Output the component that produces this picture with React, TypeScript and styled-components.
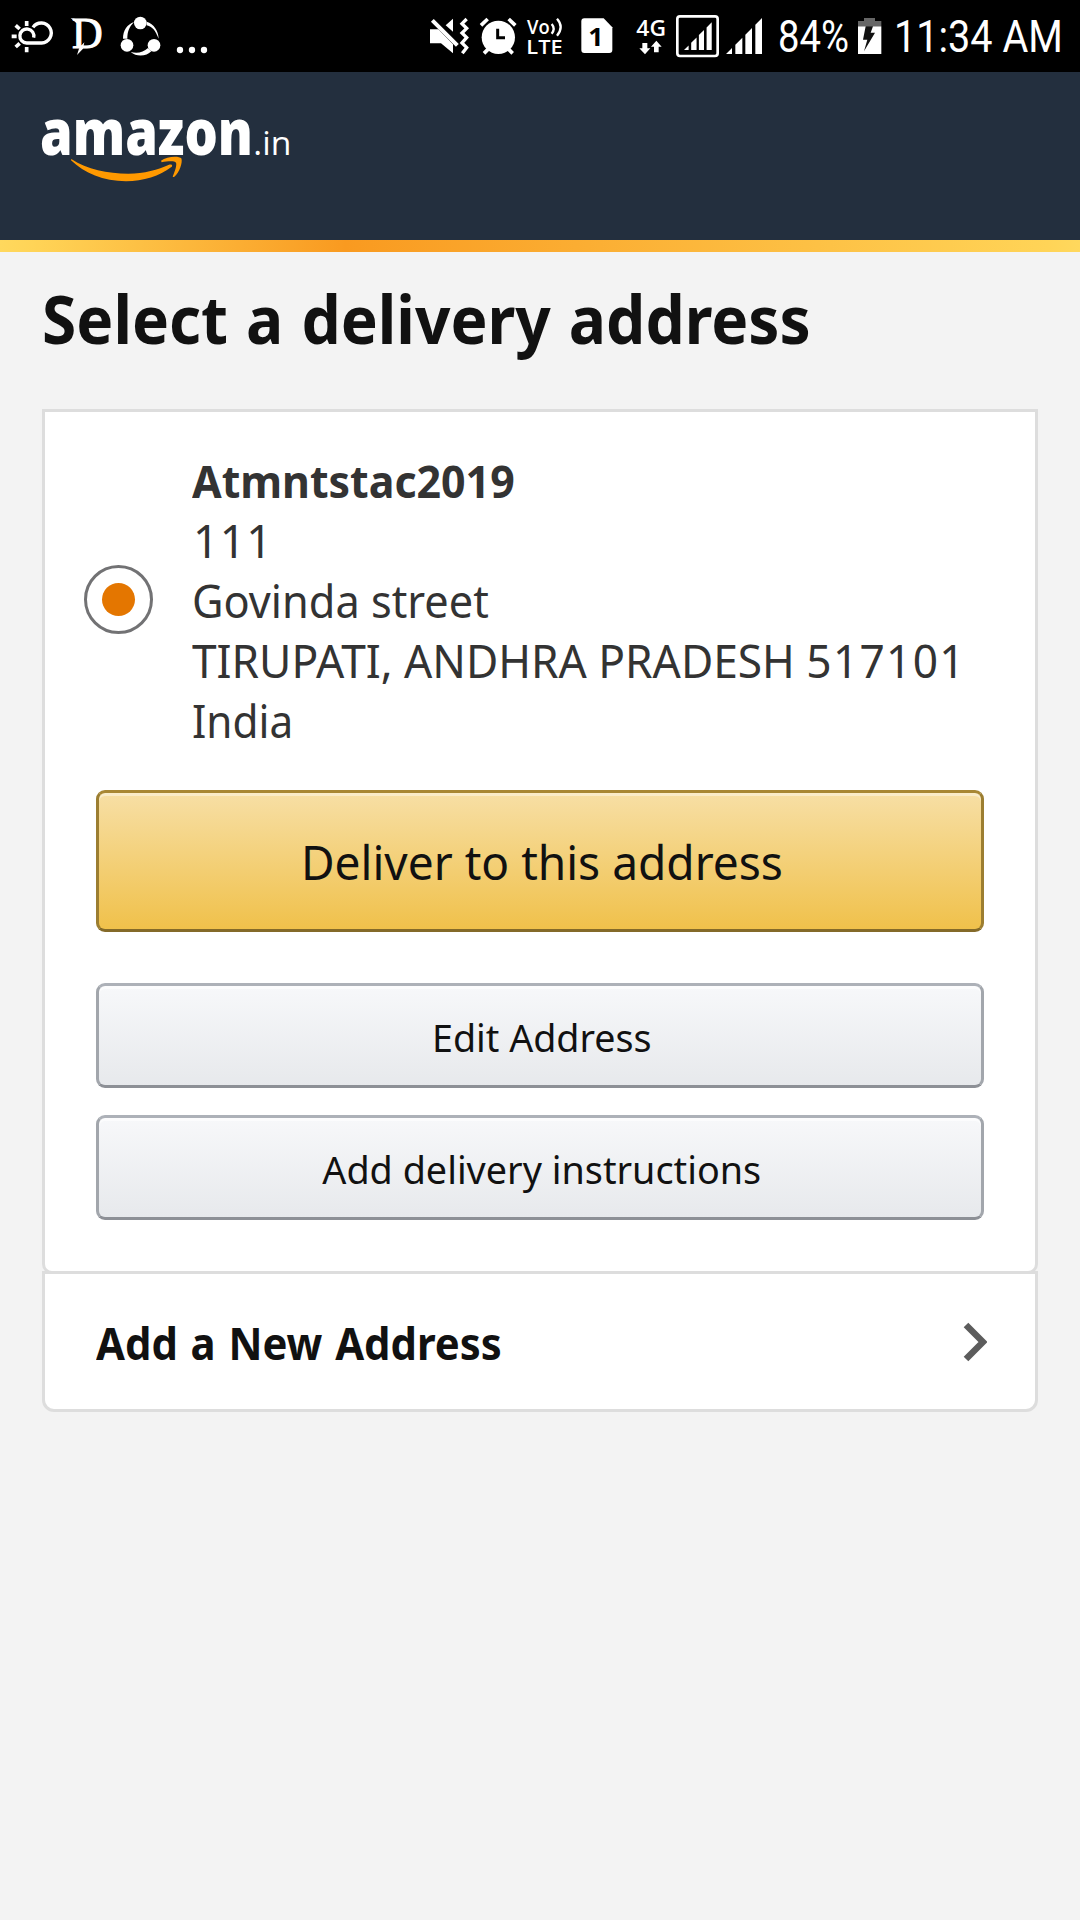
import React from "react";
import styled, { createGlobalStyle } from "styled-components";

const GlobalStyle = createGlobalStyle`
  *, *::before, *::after { box-sizing: border-box; }
  body {
    margin: 0;
    background: #f3f3f3;
    font-family: "Noto Sans", "Open Sans", sans-serif;
    color: #111;
  }
`;

const Page = styled.div`
  width: 1080px;
  min-height: 1920px;
  background: #f3f3f3;
  overflow: hidden;
`;

const StatusBar = styled.div`
  display: flex;
  justify-content: space-between;
  height: 72px;
  background: #000;
  color: #fff;
`;

const StatusGroup = styled.div`
  display: flex;
  height: 72px;
`;

const Glyph = styled.svg<{ $gap: number }>`
  display: block;
  flex: none;
  height: 72px;
  margin-left: ${(p) => p.$gap}px;
  overflow: visible;
  fill: #fff;
  font-family: "Open Sans", "Noto Sans", sans-serif;
`;

const StatusText = styled.div<{ $gap: number; $width: number }>`
  flex: none;
  width: ${(p) => p.$width}px;
  margin-left: ${(p) => p.$gap}px;
  font: 400 45px/74px Roboto, sans-serif;
  white-space: nowrap;
`;

const Squeeze = styled.span<{ $scale: number; $from?: string }>`
  display: inline-block;
  transform: scaleX(${(p) => p.$scale});
  transform-origin: ${(p) => p.$from ?? "left"} center;
`;

const Header = styled.header`
  height: 168px;
  padding: 23px 20px 0;
  background: #232f3e;
`;

const Logo = styled.svg`
  display: block;
  width: 300px;
  height: 110px;
  overflow: visible;
`;

const Ribbon = styled.div`
  height: 12px;
  background: linear-gradient(to right, #ffd85d 0%, #ffd457 3%, #f99a20 32%, #ffd457 97%, #ffd85d 100%);
`;

const Main = styled.main`
  padding: 0 42px;
`;

const Title = styled.h1`
  margin: 0;
  height: 157px;
  padding-top: 26px;
  font-size: 67px;
  line-height: 80px;
  font-weight: 700;
  word-spacing: 2px;
  white-space: nowrap;
`;

const Card = styled.section`
  height: 865px;
  padding: 39px 51px 0;
  border: 3px solid #ddd;
  border-radius: 0 0 10px 10px;
  background: #fff;
`;

const AddressOption = styled.label`
  display: flex;
  align-items: center;
  height: 300px;
`;

const Radio = styled.span`
  flex: none;
  display: grid;
  place-items: center;
  width: 69px;
  height: 69px;
  margin: -3px 39px 0 -12px;
  border: 3px solid #727274;
  border-radius: 50%;
`;

const RadioDot = styled.span`
  width: 33px;
  height: 33px;
  border-radius: 50%;
  background: #e47600;
`;

const Address = styled.div`
  font-size: 45px;
  line-height: 60px;
  color: #333;
  white-space: nowrap;
`;

const AddressLine = styled.div<{ $bold?: boolean; $indent?: number; $track?: number }>`
  padding-left: ${(p) => p.$indent ?? 0}px;
  font-weight: ${(p) => (p.$bold ? 700 : 400)};
  letter-spacing: ${(p) => p.$track ?? 0}px;
`;

const PostalCode = styled.span`
  letter-spacing: 1.3px;
`;

const Button = styled.button<{ $primary?: boolean; $top: number }>`
  display: flex;
  justify-content: center;
  align-items: center;
  width: 888px;
  height: ${(p) => (p.$primary ? 142 : 105)}px;
  margin: ${(p) => p.$top}px 0 0;
  padding: 1px 0 0 4px;
  border: 3px solid;
  border-color: ${(p) => (p.$primary ? "#a88734 #9c7e31 #846a29" : "#adb1b8 #a2a6ac #8d9096")};
  border-radius: 9px;
  background: ${(p) =>
    p.$primary ? "linear-gradient(#f7dfa5, #f0c14b)" : "linear-gradient(#f7f8fa, #e7e9ec)"};
  box-shadow: inset 0 3px 0 rgba(255, 255, 255, ${(p) => (p.$primary ? 0.4 : 0.6)});
  font-family: inherit;
  font-size: ${(p) => (p.$primary ? 47 : 39)}px;
  color: #111;
  white-space: nowrap;
`;

const NewAddress = styled.a`
  display: flex;
  align-items: center;
  justify-content: space-between;
  height: 141px;
  margin-top: -3px;
  padding: 1px 48px 0 51px;
  border: 3px solid #ddd;
  border-radius: 0 0 12px 12px;
  background: #fff;
  font-size: 45px;
  font-weight: 700;
  word-spacing: 2px;
  white-space: nowrap;
`;

const Chevron = styled.svg`
  display: block;
  width: 24px;
  height: 40px;
`;

const signalBars = (x: number, base: number, s: number) => (
  <g transform={`translate(${x} ${base}) scale(${s})`}>
    <path d="M0 0 L18 -18 V0Z M28 0 V-28 L49 -49 V0Z M58 0 V-58 L78 -78 V0Z M88 0 V-88 L108 -108 V0Z" />
  </g>
);

function StatusIcons() {
  return (
    <StatusBar>
      <StatusGroup>
        <Glyph $gap={11} width={43} viewBox="33 0 129 216">
          <g fill="none" stroke="#fff" strokeWidth="10">
            <path d="M101 113 A21 21 0 1 0 80 129 H125 A30 30 0 1 0 99 82" />
            <path d="M35 109 H50 M80 63 V78 M80 141 V157" strokeWidth="11" />
            <path d="M47 76 L59 87 M47 141 L59 130" strokeWidth="11" />
          </g>
        </Glyph>
        <Glyph $gap={16} width={34} viewBox="210 0 102 216">
          <text x="216" y="145" fontFamily="Liberation Serif" fontSize="130" stroke="#fff" strokeWidth="3" textLength="92" lengthAdjust="spacingAndGlyphs">D</text>
          <path d="M212 54 L242 60 L240 75 L228 68Z M242 139 L253 127 L249 146 L231 165 L237 146Z" />
        </Glyph>
        <Glyph $gap={16} width={41} viewBox="360 0 123 216">
          <path d="M369 116 C369 91 382 73 402 66 C387 82 382 95 382 116Z M440 65 C462 72 475 92 476 116 C465 91 460 82 440 76Z M392 156 C413 161 430 157 444 144 L454 154 C440 169 410 172 392 156Z" />
          <circle cx="421" cy="69" r="19" />
          <circle cx="381" cy="136" r="19" />
          <circle cx="462" cy="136" r="19" />
        </Glyph>
        <Glyph $gap={14} width={34} viewBox="525 0 102 216">
          <circle cx="540" cy="150" r="9.5" />
          <circle cx="576" cy="150" r="9.5" />
          <circle cx="612" cy="150" r="9.5" />
        </Glyph>
      </StatusGroup>
      <StatusGroup>
        <Glyph $gap={0} width={39} viewBox="60 0 117 216">
          <path d="M60 88 H85 L129 133 V160 L93 130 H60Z M107 76 L129 56 V95Z" />
          <path d="M67 61 L142 136" stroke="#fff" strokeWidth="12" />
          <path d="M170 57 L156 71 L170 85 L156 99 L170 113 L156 129 L170 143 L157 160" fill="none" stroke="#fff" strokeWidth="10" />
        </Glyph>
        <Glyph $gap={11} width={37} viewBox="210 0 111 216">
          <circle cx="265" cy="112" r="50" />
          <path d="M213 76 L233 57 M296 57 L316 76" stroke="#fff" strokeWidth="11" />
          <path d="M222 160 L236 146 M308 160 L294 146" stroke="#fff" strokeWidth="11" />
          <path d="M263 86 V113 H285" fill="none" stroke="#000" strokeWidth="9" />
        </Glyph>
        <Glyph $gap={10} width={36} viewBox="352 0 108 216">
          <text x="352" y="102" fontSize="58" fontWeight="600" textLength="68" lengthAdjust="spacingAndGlyphs">Vo</text>
          <text x="350" y="162" fontSize="61" fontWeight="600" textLength="109" lengthAdjust="spacingAndGlyphs">LTE</text>
          <path d="M426 72 Q438 86 426 101 M442 56 Q464 80 442 107" fill="none" stroke="#fff" strokeWidth="7" />
        </Glyph>
        <Glyph $gap={18} width={32} viewBox="514 0 96 216">
          <path d="M524 55 H582 L608 82 V150 Q608 159 599 159 H524 Q515 159 515 150 V64 Q515 55 524 55Z" />
          <text x="536" y="137" fontSize="76" fontWeight="700" fill="#000" textLength="46" lengthAdjust="spacingAndGlyphs">1</text>
        </Glyph>
        <Glyph $gap={23} width={31} viewBox="678 0 93 216">
          <text x="679" y="107" fontSize="65" fontWeight="600" textLength="89" lengthAdjust="spacingAndGlyphs">4G</text>
          <path d="M697 129 H712 V145 H721 L705 163 L688 145 H697Z M732 157 V140 H723 L739 122 L755 140 H746 V157Z" />
        </Glyph>
        <Glyph $gap={9} width={43} viewBox="798 0 129 216">
          <rect x="802" y="49" width="121" height="119" rx="8" fill="none" stroke="#fff" strokeWidth="8" />
          {signalBars(822, 150, 0.77)}
        </Glyph>
        <Glyph $gap={7} width={37} viewBox="78 0 111 216">
          {signalBars(78, 162, 1)}
        </Glyph>
        <StatusText $gap={15} $width={71}>
          <Squeeze $scale={0.85}>84%</Squeeze>
        </StatusText>
        <Glyph $gap={9} width={24} viewBox="474 0 72 216">
          <path d="M492 54 H525 V63 H544 V79 H474 V63 H492Z" fill="#666" />
          <rect x="474" y="79" width="70" height="83" />
          <path d="M497 79 H519 L512 98 H525 L492 154 L502 119 H489Z" fill="#111" />
        </Glyph>
        <StatusText $gap={12} $width={186}>
          <Squeeze $scale={0.88}>11:34 AM</Squeeze>
        </StatusText>
      </StatusGroup>
    </StatusBar>
  );
}

function AmazonLogo() {
  return (
    <Logo viewBox="0 0 900 330">
      <g fill="#fff">
        <text x="60" y="180" fontFamily="Open Sans" fontWeight="800" fontSize="189" textLength="639" lengthAdjust="spacingAndGlyphs">amazon</text>
        <text x="700" y="180" fontFamily="Open Sans" fontWeight="400" fontSize="100" textLength="114" lengthAdjust="spacingAndGlyphs">.in</text>
      </g>
      <g fill="#ff9900">
        <path d="M154 192 C202 224 262 236 325 236 C372 236 415 223 447 209 C456 206 460 212 453 217 C420 243 370 259 318 259 C250 259 193 234 153 196Z" />
        <path d="M423 197 C440 183 478 182 484 190 C489 201 478 234 463 245 C460 247 457 246 459 242 C465 228 471 210 468 203 C463 197 442 199 425 202Z" />
      </g>
    </Logo>
  );
}

export default function App() {
  return (
    <Page>
      <GlobalStyle />
      <StatusIcons />
      <Header>
        <AmazonLogo />
      </Header>
      <Ribbon />
      <Main>
        <Title>
          <Squeeze $scale={0.928}>Select a delivery address</Squeeze>
        </Title>
        <Card>
          <AddressOption>
            <Radio>
              <RadioDot />
            </Radio>
            <Address>
              <AddressLine $bold>
                <Squeeze $scale={0.953}>Atmntstac2019</Squeeze>
              </AddressLine>
              <AddressLine $indent={1} $track={0.9}>111</AddressLine>
              <AddressLine>
                <Squeeze $scale={0.962}>Govinda street</Squeeze>
              </AddressLine>
              <AddressLine>
                <Squeeze $scale={0.983}>
                  TIRUPATI, ANDHRA PRADESH <PostalCode>517101</PostalCode>
                </Squeeze>
              </AddressLine>
              <AddressLine>
                <Squeeze $scale={0.94}>India</Squeeze>
              </AddressLine>
            </Address>
          </AddressOption>
          <Button $primary $top={39}>
            <Squeeze $scale={0.98} $from="center">Deliver to this address</Squeeze>
          </Button>
          <Button $top={51}>
            <Squeeze $scale={0.965} $from="center">Edit Address</Squeeze>
          </Button>
          <Button $top={27}>
            <Squeeze $scale={0.968} $from="center">Add delivery instructions</Squeeze>
          </Button>
        </Card>
        <NewAddress>
          <Squeeze $scale={0.93}>Add a New Address</Squeeze>
          <Chevron viewBox="0 0 24 40">
            <path d="M3 3 L20 20 L3 37" fill="none" stroke="#5c5c5c" strokeWidth="6.5" />
          </Chevron>
        </NewAddress>
      </Main>
    </Page>
  );
}
